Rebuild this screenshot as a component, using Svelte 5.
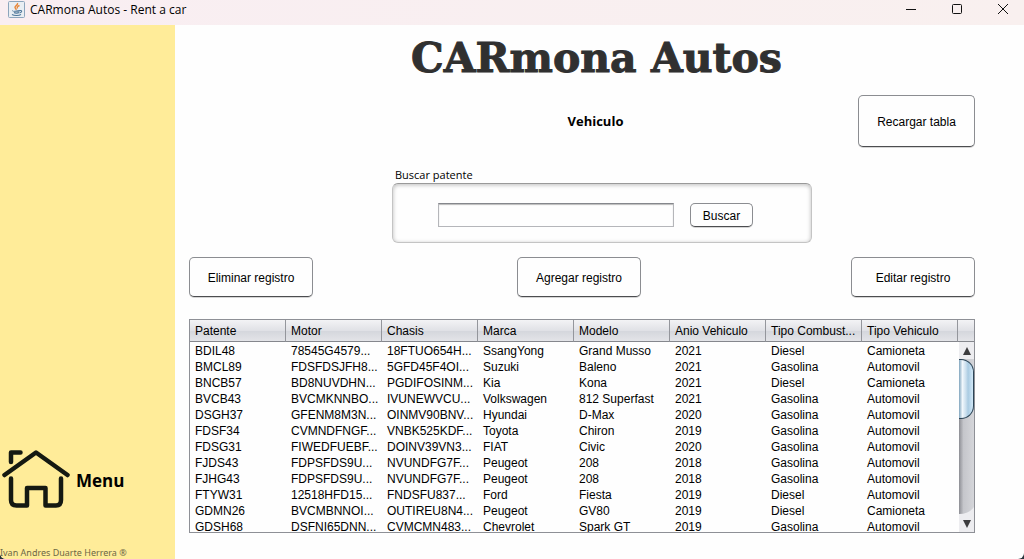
<script>
  const columns = ['Patente', 'Motor', 'Chasis', 'Marca', 'Modelo', 'Anio Vehiculo', 'Tipo Combust...', 'Tipo Vehiculo'];
  const rows = [
    ['BDIL48', '78545G4579...', '18FTUO654H...', 'SsangYong', 'Grand Musso', '2021', 'Diesel', 'Camioneta'],
    ['BMCL89', 'FDSFDSJFH8...', '5GFD45F4OI...', 'Suzuki', 'Baleno', '2021', 'Gasolina', 'Automovil'],
    ['BNCB57', 'BD8NUVDHN...', 'PGDIFOSINM...', 'Kia', 'Kona', '2021', 'Diesel', 'Camioneta'],
    ['BVCB43', 'BVCMKNNBO...', 'IVUNEWVCU...', 'Volkswagen', '812 Superfast', '2021', 'Gasolina', 'Automovil'],
    ['DSGH37', 'GFENM8M3N...', 'OINMV90BNV...', 'Hyundai', 'D-Max', '2020', 'Gasolina', 'Automovil'],
    ['FDSF34', 'CVMNDFNGF...', 'VNBK525KDF...', 'Toyota', 'Chiron', '2019', 'Gasolina', 'Automovil'],
    ['FDSG31', 'FIWEDFUEBF...', 'DOINV39VN3...', 'FIAT', 'Civic', '2020', 'Gasolina', 'Automovil'],
    ['FJDS43', 'FDPSFDS9U...', 'NVUNDFG7F...', 'Peugeot', '208', '2018', 'Gasolina', 'Automovil'],
    ['FJHG43', 'FDPSFDS9U...', 'NVUNDFG7F...', 'Peugeot', '208', '2018', 'Gasolina', 'Automovil'],
    ['FTYW31', '12518HFD15...', 'FNDSFU837...', 'Ford', 'Fiesta', '2019', 'Diesel', 'Automovil'],
    ['GDMN26', 'BVCMBNNOI...', 'OUTIREU8N4...', 'Peugeot', 'GV80', '2019', 'Diesel', 'Camioneta'],
    ['GDSH68', 'DSFNI65DNN...', 'CVMCMN483...', 'Chevrolet', 'Spark GT', '2019', 'Gasolina', 'Automovil']
  ];
  let query = $state('');
</script>

<div class="window">
  <header class="titlebar">
    <svg class="java" width="17" height="17" viewBox="0 0 17 17" aria-hidden="true">
      <rect x="0.5" y="0.5" width="16" height="16" rx="1" fill="#e9eef3" stroke="#8ca5bc" />
      <path d="M9.500 2c1 2-3 3-2.500 4.500C7.200 7.500 8.500 8 8 9M11.500 4.500C9 5.500 9 6.500 9.500 7.500" fill="none" stroke="#e8873a" stroke-width="1.400" />
      <path d="M5 9.500c-1 1 6 1 7 0M6 11.500c1 .8 4 .8 5 0M12 9.500c2.500-.5 2 2-.5 2.500M4 13.500c2 1.300 7 1.300 9 0" fill="none" stroke="#4d7699" stroke-width="1.100" />
    </svg>
    <span class="caption">CARmona Autos - Rent a car</span>
    <div class="controls">
      <button type="button" aria-label="Minimizar">
        <svg width="12" height="12" viewBox="0 0 12 12"><path d="M1 5.500h10" /></svg>
      </button>
      <button type="button" aria-label="Maximizar">
        <svg width="12" height="12" viewBox="0 0 12 12"><rect x="1.500" y="0.500" width="9" height="9" rx="1" /></svg>
      </button>
      <button type="button" aria-label="Cerrar">
        <svg width="12" height="12" viewBox="0 0 12 12"><path d="M1 0l10 10M11 0L1 10" /></svg>
      </button>
    </div>
  </header>

  <div class="body">
    <aside>
      <button type="button" class="menu">
        <svg width="70" height="62" viewBox="0 0 70 62" aria-hidden="true">
          <path d="M4.500 26L36 3.500 67.500 26M11 13V3.500H20.500M11 29.500V51q0 5.500 5.500 5.500H27V39h18.500v17.500H56q5 0 5-5.500V29.500" fill="none" stroke="#151912" stroke-width="4.500" stroke-linecap="round" stroke-linejoin="round" />
        </svg>
        <span>Menu</span>
      </button>
      <small>Ivan Andres Duarte Herrera ®</small>
    </aside>

    <main>
      <h1>CARmona Autos</h1>
      <div class="heading">
        <h2>Vehiculo</h2>
        <button type="button" class="btn reload">Recargar tabla</button>
      </div>

      <form class="search" onsubmit={(e) => e.preventDefault()}>
        <label for="patente">Buscar patente</label>
        <div class="panel">
          <input id="patente" type="text" bind:value={query} />
          <button type="submit" class="btn find">Buscar</button>
        </div>
      </form>

      <div class="actions">
        <button type="button" class="btn">Eliminar registro</button>
        <span></span>
        <button type="button" class="btn">Agregar registro</button>
        <span></span>
        <button type="button" class="btn">Editar registro</button>
      </div>

      <div class="frame">
        <table>
          <thead>
            <tr>
              {#each columns as c}<th scope="col">{c}</th>{/each}
              <td class="corner"></td>
            </tr>
          </thead>
          <tbody>
            {#each rows as row}
              <tr>
                {#each row as cell}<td>{cell}</td>{/each}
                <td></td>
              </tr>
            {/each}
          </tbody>
        </table>
        <div class="scroll">
          <button type="button" aria-label="Subir"><svg width="8" height="8" viewBox="0 0 8 8"><path d="M4 0l4 8H0z" /></svg></button>
          <div class="track">
            <div class="thumb"></div>
            <svg class="curve" width="15" height="8" viewBox="0 0 15 8"><path d="M0 7Q10 7 15 0V8H0z" fill="#ededf0" /></svg>
          </div>
          <button type="button" aria-label="Bajar"><svg width="8" height="8" viewBox="0 0 8 8"><path d="M0 0h8L4 8z" /></svg></button>
        </div>
      </div>
    </main>
  </div>
</div>

<style>
  :global(body) {
    margin: 0;
    background: #26333b;
  }
  .window {
    display: flex;
    flex-direction: column;
    height: 100vh;
    overflow: hidden;
    background: #fefefe;
    border-radius: 0 0 6px 6px;
    color: #000;
    font: 12px/16px 'Liberation Sans', Arial, sans-serif;
  }
  button {
    font: inherit;
    color: inherit;
    padding: 0;
    border: 0;
    background: none;
  }
  .titlebar {
    display: flex;
    align-items: center;
    flex: none;
    height: 25px;
    padding-left: 8px;
    box-sizing: border-box;
    background: linear-gradient(90deg, #f9eef2, #f9f0ef);
  }
  .java {
    margin-bottom: 6px;
  }
  .caption {
    margin: 0 0 5px 5px;
    font-family: 'Open Sans', 'Noto Sans', sans-serif;
  }
  .controls {
    display: flex;
    margin: 0 -2px 6px auto;
  }
  .controls button {
    display: grid;
    place-items: center;
    width: 46px;
    height: 19px;
  }
  .controls svg {
    fill: none;
    stroke: #111;
  }
  .body {
    display: flex;
    flex: 1;
    min-height: 0;
  }
  aside {
    display: flex;
    flex-direction: column;
    justify-content: flex-end;
    flex: none;
    width: 175px;
    background: #ffec99;
    font-family: 'Open Sans', 'Noto Sans', sans-serif;
  }
  .menu {
    display: flex;
    align-items: center;
    gap: 6px;
    font-size: 17px;
    font-weight: 700;
  }
  .menu span {
    padding-top: 2px;
  }
  aside small {
    margin-top: 35px;
    font: 9px/13px 'Noto Sans', sans-serif;
    color: #6d6745;
    white-space: nowrap;
  }
  main {
    display: flex;
    flex-direction: column;
    flex: 1;
    min-width: 0;
    padding: 8px 49px 26px 14px;
  }
  h1 {
    align-self: center;
    margin: 0 0 12px 29px;
    font: 900 41px/50px Rockwell, 'DejaVu Serif', serif;
    color: #303030;
    -webkit-text-stroke: 1px #303030;
    white-space: nowrap;
  }
  .heading {
    display: grid;
    grid-template-columns: 117px 1fr 117px;
    align-items: center;
  }
  h2 {
    grid-column: 2;
    margin: 0 0 0 27px;
    text-align: center;
    font: 700 13px/18px 'Open Sans', 'Noto Sans', sans-serif;
  }
  .btn {
    height: 40px;
    padding-top: 2px;
    border: 1px solid #8b8d91;
    border-bottom-color: #4c4d50;
    border-radius: 5px;
    background: #fefefe;
    box-shadow: 0 1px 0 #d5d5d5;
  }
  .reload {
    height: 52px;
  }
  .search {
    align-self: center;
    width: 420px;
    margin: 20px 0 14px 40px;
  }
  .search label {
    display: block;
    padding-left: 3px;
    font-size: 11px;
    font-family: 'Open Sans', 'Noto Sans', sans-serif;
  }
  .panel {
    display: flex;
    align-items: center;
    gap: 16px;
    height: 60px;
    padding: 4px 58px 0 45px;
    box-sizing: border-box;
    border: 1px solid #c4c4c4;
    border-top-color: #999;
    border-radius: 6px;
    box-shadow: inset 0 1px 4px #bbb;
  }
  .panel input {
    flex: 1;
    min-width: 0;
    height: 24px;
    box-sizing: border-box;
    padding: 2px 6px;
    border: 1px solid #b5b6ba;
    border-top-color: #85878c;
    box-shadow: inset 0 1px 1px #bbb;
    background: #fefefe;
    font: inherit;
  }
  .find {
    width: 63px;
    height: 24px;
  }
  .actions {
    display: grid;
    grid-template-columns: 124px 204fr 124px 210fr 124px;
    margin-bottom: 22px;
  }
  .frame {
    position: relative;
    flex: 1;
    min-height: 0;
    overflow: hidden;
    border: 1px solid #8e9096;
  }
  table {
    width: 100%;
    table-layout: fixed;
    border-collapse: separate;
    border-spacing: 0;
  }
  th,
  td {
    height: 16px;
    padding: 0 0 0 5px;
    overflow: hidden;
    text-align: left;
    font-weight: 400;
    white-space: nowrap;
  }
  th,
  .corner {
    height: 21px;
    border-right: 1px solid #94969c;
    border-bottom: 1px solid #85878d;
    background: linear-gradient(#f3f3f5, #e0e1e6 50%, #d4d6dc 51%, #e3e4e8);
  }
  tbody tr:first-child td {
    padding-top: 1px;
  }
  .corner {
    width: 11px;
    border-right: 0;
  }
  .scroll {
    position: absolute;
    top: 22px;
    right: 0;
    bottom: 0;
    display: flex;
    flex-direction: column;
    width: 15px;
    background: #ededf0;
  }
  .scroll button {
    display: grid;
    place-items: center;
    flex: none;
    height: 17px;
  }
  .scroll button svg {
    fill: #3c3c3e;
  }
  .track {
    display: flex;
    flex-direction: column;
    justify-content: space-between;
    flex: 1;
    background: linear-gradient(90deg, #8d8e94, #c5c6cb 30%, #d5d6da);
  }
  .thumb {
    height: 60px;
    border: 1px solid #2c4557;
    border-left: 0;
    border-radius: 0 13px 13px 0;
    box-sizing: border-box;
    background: linear-gradient(90deg, #7fa4bd, #f0f7fc 25%, #c9deed 50%, #a9cbe2 65%, #d3e9f8);
  }
</style>
